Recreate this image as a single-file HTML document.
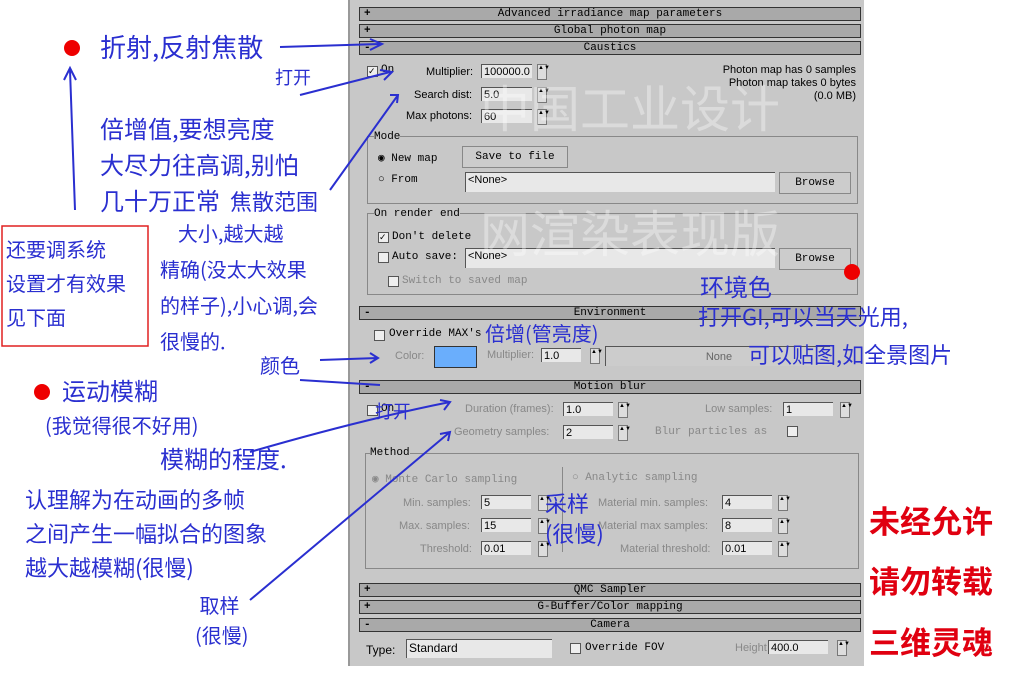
<!DOCTYPE html>
<html><head><meta charset="utf-8"><style>
body{margin:0;width:1024px;height:674px;background:#fff;position:relative;overflow:hidden;font-family:"Liberation Sans",sans-serif}
.a{position:absolute}
#p{position:absolute;left:348px;top:0;width:514px;height:666px;background:#c8c8c8;border-left:2px solid #999}
.h{position:absolute;left:9px;width:500px;height:12px;background:#a9a9a9;border:1px solid #333;font:11px "Liberation Mono",monospace;text-align:center;line-height:12px;color:#000}
.h i{position:absolute;left:4px;font-style:normal;font-weight:bold}
.t{position:absolute;font-size:11px;color:#000;white-space:nowrap}
.m{font-family:"Liberation Mono",monospace}
.g{color:#888}
.in{position:absolute;background:#e8e8e8;border-top:1px solid #555;border-left:1px solid #555;font-size:11px;line-height:14px;padding-left:2px;height:14px;box-sizing:border-box}
.sp{position:absolute;width:8px;height:14px;border:1px solid #777;background:#ddd;font-size:6px;line-height:7px;text-align:center}
.cb{position:absolute;width:9px;height:9px;border:1px solid #555;background:#eee;font-size:9px;line-height:9px}
.grp{position:absolute;border:1px solid #888}
.btn{position:absolute;border:1px solid #888;background:#ccc;font:11px "Liberation Mono",monospace;text-align:center}
.hw{position:absolute;color:#2a2fd0;font-family:"Noto Sans CJK SC",sans-serif;white-space:nowrap}
.r{position:absolute;color:#e00010;font-family:"Noto Sans CJK SC",sans-serif;font-size:31px;font-weight:bold}
.wm{position:absolute;color:rgba(255,255,255,.35);font-family:"Noto Sans CJK SC",sans-serif;font-size:50px}
</style></head><body>
<div id="p">
<div class="h" style="top:7px"><i>+</i>Advanced irradiance map parameters</div>
<div class="h" style="top:24px"><i>+</i>Global photon map</div>
<div class="h" style="top:41px"><i>-</i>Caustics</div>
<div class="cb" style="left:17px;top:66px">✓</div><div class="t m" style="left:31px;top:64px">On</div>
<div class="t" style="left:76px;top:66px">Multiplier:</div><div class="in" style="left:131px;top:64px;width:51px">100000.0</div><div class="sp" style="left:187px;top:64px">▲▼</div>
<div class="t" style="left:64px;top:89px">Search dist:</div><div class="in" style="left:131px;top:87px;width:51px">5.0</div><div class="sp" style="left:187px;top:87px">▲▼</div>
<div class="t" style="left:56px;top:110px">Max photons:</div><div class="in" style="left:131px;top:109px;width:51px">60</div><div class="sp" style="left:187px;top:109px">▲▼</div>
<div class="t" style="right:8px;top:64px;text-align:right;line-height:13px">Photon map has 0 samples<br>Photon map takes 0 bytes<br>(0.0 MB)</div>
<div class="grp" style="left:17px;top:136px;width:489px;height:66px"></div>
<div class="t m" style="left:24px;top:131px;background:#c8c8c8">Mode</div>
<div class="t m" style="left:28px;top:151px">◉ New map</div>
<div class="btn" style="left:112px;top:146px;width:104px;height:20px;line-height:20px">Save to file</div>
<div class="t m" style="left:28px;top:174px">○ From</div>
<div class="in" style="left:115px;top:172px;width:310px;height:20px">&lt;None&gt;</div>
<div class="btn" style="left:429px;top:172px;width:70px;height:20px;line-height:20px">Browse</div>
<div class="grp" style="left:17px;top:213px;width:489px;height:80px"></div>
<div class="t m" style="left:24px;top:208px;background:#c8c8c8">On render end</div>
<div class="cb" style="left:28px;top:232px">✓</div><div class="t m" style="left:42px;top:231px">Don't delete</div>
<div class="cb" style="left:28px;top:252px"></div><div class="t m" style="left:42px;top:251px">Auto save:</div>
<div class="in" style="left:115px;top:248px;width:310px;height:20px">&lt;None&gt;</div>
<div class="btn" style="left:429px;top:248px;width:70px;height:20px;line-height:20px">Browse</div>
<div class="cb" style="left:38px;top:276px"></div><div class="t m g" style="left:52px;top:275px">Switch to saved map</div>
<div class="h" style="top:306px"><i>-</i>Environment</div>
<div class="cb" style="left:24px;top:330px"></div><div class="t m" style="left:39px;top:328px">Override MAX's</div>
<div class="t g" style="left:45px;top:350px">Color:</div>
<div class="a" style="left:84px;top:346px;width:41px;height:20px;background:#6aaefc;border:1px solid #333"></div>
<div class="t g" style="left:137px;top:349px">Multiplier:</div><div class="in" style="left:191px;top:348px;width:40px">1.0</div><div class="sp" style="left:240px;top:348px">▲▼</div>
<div class="in" style="left:255px;top:346px;width:225px;height:20px;background:#ccc;text-align:center;color:#666;line-height:20px">None</div>
<div class="h" style="top:380px"><i>-</i>Motion blur</div>
<div class="cb" style="left:17px;top:405px"></div><div class="t m" style="left:31px;top:403px">On</div>
<div class="t g" style="left:115px;top:403px">Duration (frames):</div><div class="in" style="left:213px;top:402px;width:50px">1.0</div><div class="sp" style="left:268px;top:402px">▲▼</div>
<div class="t g" style="left:355px;top:403px">Low samples:</div><div class="in" style="left:433px;top:402px;width:50px">1</div><div class="sp" style="left:490px;top:402px">▲▼</div>
<div class="t g" style="left:104px;top:426px">Geometry samples:</div><div class="in" style="left:213px;top:425px;width:50px">2</div><div class="sp" style="left:268px;top:425px">▲▼</div>
<div class="t m g" style="left:305px;top:426px">Blur particles as</div><div class="cb" style="left:437px;top:426px"></div>
<div class="grp" style="left:15px;top:453px;width:492px;height:114px"></div>
<div class="t m" style="left:20px;top:447px;background:#c8c8c8">Method</div>
<div class="t m g" style="left:22px;top:472px">◉ Monte Carlo sampling</div>
<div class="t m g" style="left:222px;top:472px">○ Analytic sampling</div>
<div class="a" style="left:212px;top:467px;width:1px;height:85px;background:#888"></div>
<div class="t g" style="left:53px;top:497px">Min. samples:</div><div class="in" style="left:131px;top:495px;width:50px">5</div><div class="sp" style="left:188px;top:495px">▲▼</div>
<div class="t g" style="left:49px;top:520px">Max. samples:</div><div class="in" style="left:131px;top:518px;width:50px">15</div><div class="sp" style="left:188px;top:518px">▲▼</div>
<div class="t g" style="left:70px;top:543px">Threshold:</div><div class="in" style="left:131px;top:541px;width:50px">0.01</div><div class="sp" style="left:188px;top:541px">▲▼</div>
<div class="t g" style="left:248px;top:497px">Material min. samples:</div><div class="in" style="left:372px;top:495px;width:50px">4</div><div class="sp" style="left:428px;top:495px">▲▼</div>
<div class="t g" style="left:248px;top:520px">Material max samples:</div><div class="in" style="left:372px;top:518px;width:50px">8</div><div class="sp" style="left:428px;top:518px">▲▼</div>
<div class="t g" style="left:270px;top:543px">Material threshold:</div><div class="in" style="left:372px;top:541px;width:50px">0.01</div><div class="sp" style="left:428px;top:541px">▲▼</div>
<div class="h" style="top:583px"><i>+</i>QMC Sampler</div>
<div class="h" style="top:600px"><i>+</i>G-Buffer/Color mapping</div>
<div class="h" style="top:618px"><i>-</i>Camera</div>
<div class="t" style="left:16px;top:643px;font-size:12px">Type:</div>
<div class="in" style="left:56px;top:639px;width:146px;height:19px;line-height:17px;font-size:12px">Standard</div>
<div class="cb" style="left:220px;top:643px"></div><div class="t m" style="left:235px;top:642px">Override FOV</div>
<div class="t g" style="left:385px;top:642px">Height</div><div class="in" style="left:418px;top:640px;width:60px">400.0</div><div class="sp" style="left:487px;top:640px">▲▼</div>
<div class="wm" style="left:130px;top:70px">中国工业设计</div>
<div class="wm" style="left:130px;top:195px">网渲染表现版</div>
</div>
<svg class="a" style="left:0;top:0" width="1024" height="674"><g stroke="#2a2fd0" stroke-width="2" fill="none">
<path d="M280 47 L380 44 M370 39 L382 44 L370 50"/><path d="M300 95 L390 72 M380 70 L392 72 L384 80"/>
<path d="M330 190 L398 95 M390 95 L398 95 L397 103"/><path d="M320 360 L378 358 M370 353 L378 358 L370 363"/>
<path d="M300 380 L380 385"/><path d="M250 452 Q360 420 450 402 M440 400 L450 402 L444 410"/>
<path d="M250 600 L450 432 M440 434 L450 432 L448 441"/><path d="M75 210 L70 70 M64 80 L70 68 L76 80"/>
</g><rect x="2" y="226" width="146" height="120" fill="none" stroke="#e02020" stroke-width="1.5"/>
<circle cx="72" cy="48" r="8" fill="#e00"/><circle cx="42" cy="392" r="8" fill="#e00"/><circle cx="852" cy="272" r="8" fill="#e00"/></svg>
<div class="hw" style="left:100px;top:28px;font-size:26px">折射,反射焦散</div>
<div class="hw" style="left:275px;top:64px;font-size:18px">打开</div>
<div class="hw" style="left:100px;top:110px;font-size:24px;line-height:36px">倍增值,要想亮度<br>大尽力往高调,别怕<br>几十万正常</div>
<div class="hw" style="left:230px;top:185px;font-size:22px">焦散范围</div>
<div class="hw" style="left:160px;top:215px;font-size:20px;line-height:36px">&nbsp;&nbsp;&nbsp;&nbsp;大小,越大越<br>精确(没太大效果<br>的样子),小心调,会<br>很慢的.</div>
<div class="hw" style="left:6px;top:232px;font-size:20px;line-height:34px">还要调系统<br>设置才有效果<br>见下面</div>
<div class="hw" style="left:700px;top:268px;font-size:24px">环境色</div>
<div class="hw" style="left:485px;top:318px;font-size:20px">倍增(管亮度)</div>
<div class="hw" style="left:698px;top:300px;font-size:22px">打开GI,可以当天光用,</div>
<div class="hw" style="left:748px;top:338px;font-size:22px">可以贴图,如全景图片</div>
<div class="hw" style="left:260px;top:350px;font-size:20px">颜色</div>
<div class="hw" style="left:62px;top:372px;font-size:24px">运动模糊</div>
<div class="hw" style="left:375px;top:398px;font-size:18px">打开</div>
<div class="hw" style="left:45px;top:410px;font-size:20px">(我觉得很不好用)</div>
<div class="hw" style="left:160px;top:440px;font-size:24px">模糊的程度.</div>
<div class="hw" style="left:25px;top:482px;font-size:22px;line-height:34px">认理解为在动画的多帧<br>之间产生一幅拟合的图象<br>越大越模糊(很慢)</div>
<div class="hw" style="left:545px;top:488px;font-size:22px;line-height:30px">采样<br>(很慢)</div>
<div class="hw" style="left:195px;top:590px;font-size:20px;line-height:30px">&nbsp;取样<br>(很慢)</div>
<div class="r" style="left:869px;top:497px">未经允许</div>
<div class="r" style="left:869px;top:557px">请勿转载</div>
<div class="r" style="left:869px;top:618px">三维灵魂</div>
</body></html>
